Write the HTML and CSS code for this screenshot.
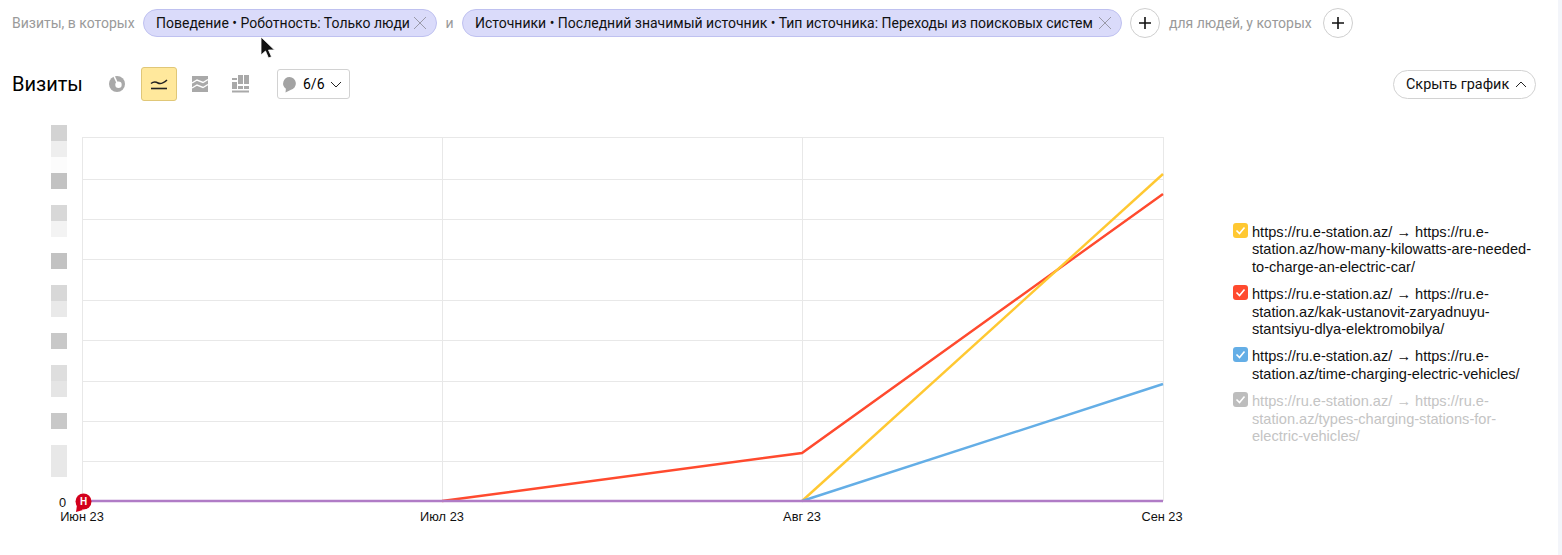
FILE: index.html
```html
<!DOCTYPE html>
<html lang="ru">
<head>
<meta charset="utf-8">
<title>Визиты</title>
<link rel="stylesheet" href="styles.css">
</head>
<body>
<div class="page">
  <div class="filters">
    <span class="hint hint-first">Визиты, в которых</span>
    <span class="chip chip-a">Поведение • Роботность: Только люди
      <svg class="chip-x" width="14" height="14" viewBox="0 0 14 14"><path d="M1 1l12 12M13 1L1 13"/></svg>
    </span>
    <span class="hint hint-and">и</span>
    <span class="chip chip-b">Источники • Последний значимый источник • Тип источника: Переходы из поисковых систем
      <svg class="chip-x" width="14" height="14" viewBox="0 0 14 14"><path d="M1 1l12 12M13 1L1 13"/></svg>
    </span>
    <span class="plus plus-a"><svg width="14" height="14" viewBox="0 0 14 14"><path d="M7 1v12M1 7h12"/></svg></span>
    <span class="hint hint-people">для людей, у которых</span>
    <span class="plus plus-b"><svg width="14" height="14" viewBox="0 0 14 14"><path d="M7 1v12M1 7h12"/></svg></span>
  </div>

  <div class="header">
    <h1 class="title">Визиты</h1>
    <span class="tool tool-pie">
      <svg width="18" height="18" viewBox="0 0 18 18"><circle cx="9" cy="9" r="8" fill="#a9a9a9"/><circle cx="10.500" cy="9.800" r="3.200" fill="#fff"/><path d="M9 7.500L5.500 0" stroke="#fff" stroke-width="1.600" fill="none"/></svg>
    </span>
    <span class="tool tool-active">
      <svg width="18" height="14" viewBox="0 0 18 14"><path class="ink" d="M1 6.500C3.500 4.500 5.500 4.500 8 6S13 6.500 17 3"/><path class="ink" d="M1 11.500h16"/></svg>
    </span>
    <span class="tool tool-area">
      <svg width="16" height="16" viewBox="0 0 16 16"><rect width="16" height="16" fill="#a9a9a9"/><path d="M0 7l5-3 6 2.500 5-3M0 12l5-3 6 2.500 5-3" stroke="#fff" stroke-width="1.400" fill="none"/></svg>
    </span>
    <span class="tool tool-bars">
      <svg width="18" height="18" viewBox="0 0 18 18"><path fill="#a9a9a9" d="M0 3h5v2H0zM0 7h5v7H0zM6 0h5v9H6zM6 11h5v3H6zM12 0h5v9h-5zM12 11h5v3h-5zM0 15.500h17V17.500H0z"/></svg>
    </span>
    <span class="notes">
      <svg width="15" height="17" viewBox="0 0 15 17"><path fill="#a3a3a3" d="M7.500 1a6.500 6.500 0 0 1 1 12.900L3.500 16.500l.4-3.700A6.500 6.500 0 0 1 7.500 1z"/></svg>
      <span class="notes-text">6/6</span>
      <svg class="chev" width="12" height="7" viewBox="0 0 12 7"><path d="M1 1l5 5 5-5"/></svg>
    </span>
    <span class="hide-btn">Скрыть график
      <svg class="chev" width="12" height="7" viewBox="0 0 12 7"><path d="M1 6l5-5 5 5"/></svg>
    </span>
  </div>

  <div class="chart-row">
    <svg class="chart" width="1200" height="420" viewBox="0 115 1200 420">
      <g class="blocks">
        <rect x="51" y="125" width="16" height="16" fill="#d3d3d3"/>
        <rect x="51" y="141" width="16" height="16" fill="#eeeeee"/>
        <rect x="51" y="157" width="16" height="16" fill="#fcfcfc"/>
        <rect x="51" y="173" width="16" height="16" fill="#c2c2c2"/>
        <rect x="51" y="205" width="16" height="16" fill="#d8d8d8"/>
        <rect x="51" y="221" width="16" height="16" fill="#f3f3f3"/>
        <rect x="51" y="253" width="16" height="16" fill="#c2c2c2"/>
        <rect x="51" y="285" width="16" height="16" fill="#d8d8d8"/>
        <rect x="51" y="301" width="16" height="16" fill="#e9e9e9"/>
        <rect x="51" y="333" width="16" height="16" fill="#c8c8c8"/>
        <rect x="51" y="365" width="16" height="16" fill="#dedede"/>
        <rect x="51" y="381" width="16" height="16" fill="#e5e5e5"/>
        <rect x="51" y="413" width="16" height="16" fill="#c8c8c8"/>
        <rect x="51" y="445" width="16" height="32" fill="#e8e8e8"/>
      </g>
      <g class="grid">
        <path d="M82 137.500H1163M82 179.500H1163M82 219.500H1163M82 259.500H1163M82 300.500H1163M82 340.500H1163M82 381.500H1163M82 421.500H1163M82 461.500H1163"/>
        <path d="M82.500 137V501M442.500 137V501M802.500 137V501M1163.500 137V501"/>
      </g>
      <g class="series">
        <path stroke="#ff4a2e" d="M442 501L802 453L1163 194"/>
        <path stroke="#ffc832" d="M802 501L1163 174"/>
        <path stroke="#64aee6" d="M802 501L1163 384"/>
        <path stroke="#b07cc6" d="M82 501H1163"/>
      </g>
      <circle class="pin" cx="83.500" cy="501.500" r="8"/>
      <path class="pin" d="M77 505l-1 7 7-2z"/>
      <text class="pin-text" x="83.500" y="505">Н</text>
      <text class="tick" x="59" y="507">0</text>
      <text class="tick tick-mid" x="82" y="521">Июн 23</text>
      <text class="tick tick-mid" x="442" y="521">Июл 23</text>
      <text class="tick tick-mid" x="802" y="521">Авг 23</text>
      <text class="tick tick-mid" x="1162" y="521">Сен 23</text>
    </svg>

    <ul class="legend">
      <li class="legend-item">
        <span class="check check-yellow"><svg width="11" height="9" viewBox="0 0 11 9"><path d="M1.500 4.500l3 3 5-6"/></svg></span>
        <span class="legend-text">https://ru.e-station.az/ → https://ru.e-station.az/how-many-kilowatts-are-needed-to-charge-an-electric-car/</span>
      </li>
      <li class="legend-item">
        <span class="check check-red"><svg width="11" height="9" viewBox="0 0 11 9"><path d="M1.500 4.500l3 3 5-6"/></svg></span>
        <span class="legend-text">https://ru.e-station.az/ → https://ru.e-station.az/kak-ustanovit-zaryadnuyu-stantsiyu-dlya-elektromobilya/</span>
      </li>
      <li class="legend-item">
        <span class="check check-blue"><svg width="11" height="9" viewBox="0 0 11 9"><path d="M1.500 4.500l3 3 5-6"/></svg></span>
        <span class="legend-text">https://ru.e-station.az/ → https://ru.e-station.az/time-charging-electric-vehicles/</span>
      </li>
      <li class="legend-item legend-off">
        <span class="check check-gray"><svg width="11" height="9" viewBox="0 0 11 9"><path d="M1.500 4.500l3 3 5-6"/></svg></span>
        <span class="legend-text">https://ru.e-station.az/ → https://ru.e-station.az/types-charging-stations-for-electric-vehicles/</span>
      </li>
    </ul>
  </div>

  <svg class="cursor" width="16" height="25" viewBox="0 0 16 25"><path fill="#111" stroke="#fff" stroke-width="0.8" d="M1 1v18l4.500-4 3 7 3-1.300-3-6.700h6z"/></svg>
  <div class="edge"></div>
</div>
</body>
</html>
```

FILE: styles.css
```css
* { box-sizing: border-box; }
html, body { margin: 0; padding: 0; background: #fff; }
body { font-family: Roboto, "Noto Sans", sans-serif; color: #000; overflow: hidden; }
.page { position: relative; width: 1562px; height: 555px; overflow: hidden; }

.filters { display: flex; align-items: center; height: 30px; margin-top: 8px; padding-left: 12px; font-size: 14px; white-space: nowrap; }
.hint { color: #9a9a9a; }
.hint-first { width: 131px; }
.hint-and { width: 25px; text-align: center; }
.hint-people { width: 143px; margin: 0 11px 0 9px; }
.chip { display: flex; align-items: center; justify-content: space-between; height: 28px; padding: 0 9px 0 12px; background: #dadbfa; border: 1px solid #bfc1f0; border-radius: 14px; color: #111; }
.chip-a { width: 294px; }
.chip-b { width: 660px; margin-right: 8px; }
.chip-x { flex: none; }
.chip-x path { stroke: #9a9aa8; stroke-width: 1; fill: none; }
.plus { display: flex; align-items: center; justify-content: center; width: 30px; height: 30px; border: 1px solid #cfcfcf; border-radius: 50%; }
.plus path { stroke: #111; stroke-width: 1.600; fill: none; }

.header { display: flex; align-items: center; height: 34px; margin-top: 29px; padding: 0 26px 0 12px; }
.title { width: 96px; margin: 0; font-size: 20px; font-weight: 400; line-height: 34px; }
.tool { display: flex; align-items: center; justify-content: center; width: 36px; height: 34px; flex: none; }
.tool-pie { margin: 0 -9px; }
.tool-active { margin-left: 15px; background: #ffe89c; border: 1px solid #e0c778; border-radius: 3px; }
.ink { fill: none; stroke: #222; stroke-width: 1.600; }
.tool-area { margin-left: 5px; }
.tool-bars { margin-left: 5px; }
.notes { display: flex; align-items: center; width: 73px; height: 30px; margin-left: 18px; padding-left: 4px; border: 1px solid #d2d2d2; border-radius: 3px; font-size: 14px; }
.notes-text { margin: 0 5px 0 6px; }
.chev path { fill: none; stroke: #222; stroke-width: 1; }
.hide-btn { display: flex; align-items: center; justify-content: space-between; width: 143px; height: 29px; margin-left: auto; padding: 0 8px 0 12px; border: 1px solid #d2d2d2; border-radius: 15px; font-size: 14.400px; color: #111; }

.chart-row { display: flex; align-items: flex-start; margin-top: 14px; }
.chart { display: block; flex: none; }
.grid path { stroke: #e8e8e8; stroke-width: 1; fill: none; }
.series path { fill: none; stroke-width: 2.400; }
.pin { fill: #d3001c; }
.pin-text { font-size: 10px; font-weight: 700; fill: #fff; text-anchor: middle; font-family: "Liberation Sans", sans-serif; }
.tick { font-family: "Liberation Sans", sans-serif; font-size: 12.800px; fill: #111; }
.tick-mid { text-anchor: middle; }

.legend { list-style: none; width: 307px; margin: 107px 0 0 33px; padding: 0; font-family: "Liberation Sans", sans-serif; font-size: 14.600px; line-height: 17.400px; color: #111; }
.legend-item { display: flex; align-items: flex-start; gap: 4px; margin-bottom: 8px; }
.legend-off { color: #c4c4c4; }
.legend-text { width: 288px; margin-top: 2px; }
.check { display: flex; align-items: center; justify-content: center; flex: none; width: 15px; height: 15px; margin-top: 1px; border-radius: 3px; }
.check path { fill: none; stroke: #fff; stroke-width: 1.600; }
.check-yellow { background: #ffc832; }
.check-red { background: #ff4a2e; }
.check-blue { background: #64aee6; }
.check-gray { background: #bdbdbd; }

.cursor { position: absolute; left: 260px; top: 36px; }
.edge { position: absolute; top: 0; right: 0; width: 4px; height: 100%; background: #f3f5fa; }
```
